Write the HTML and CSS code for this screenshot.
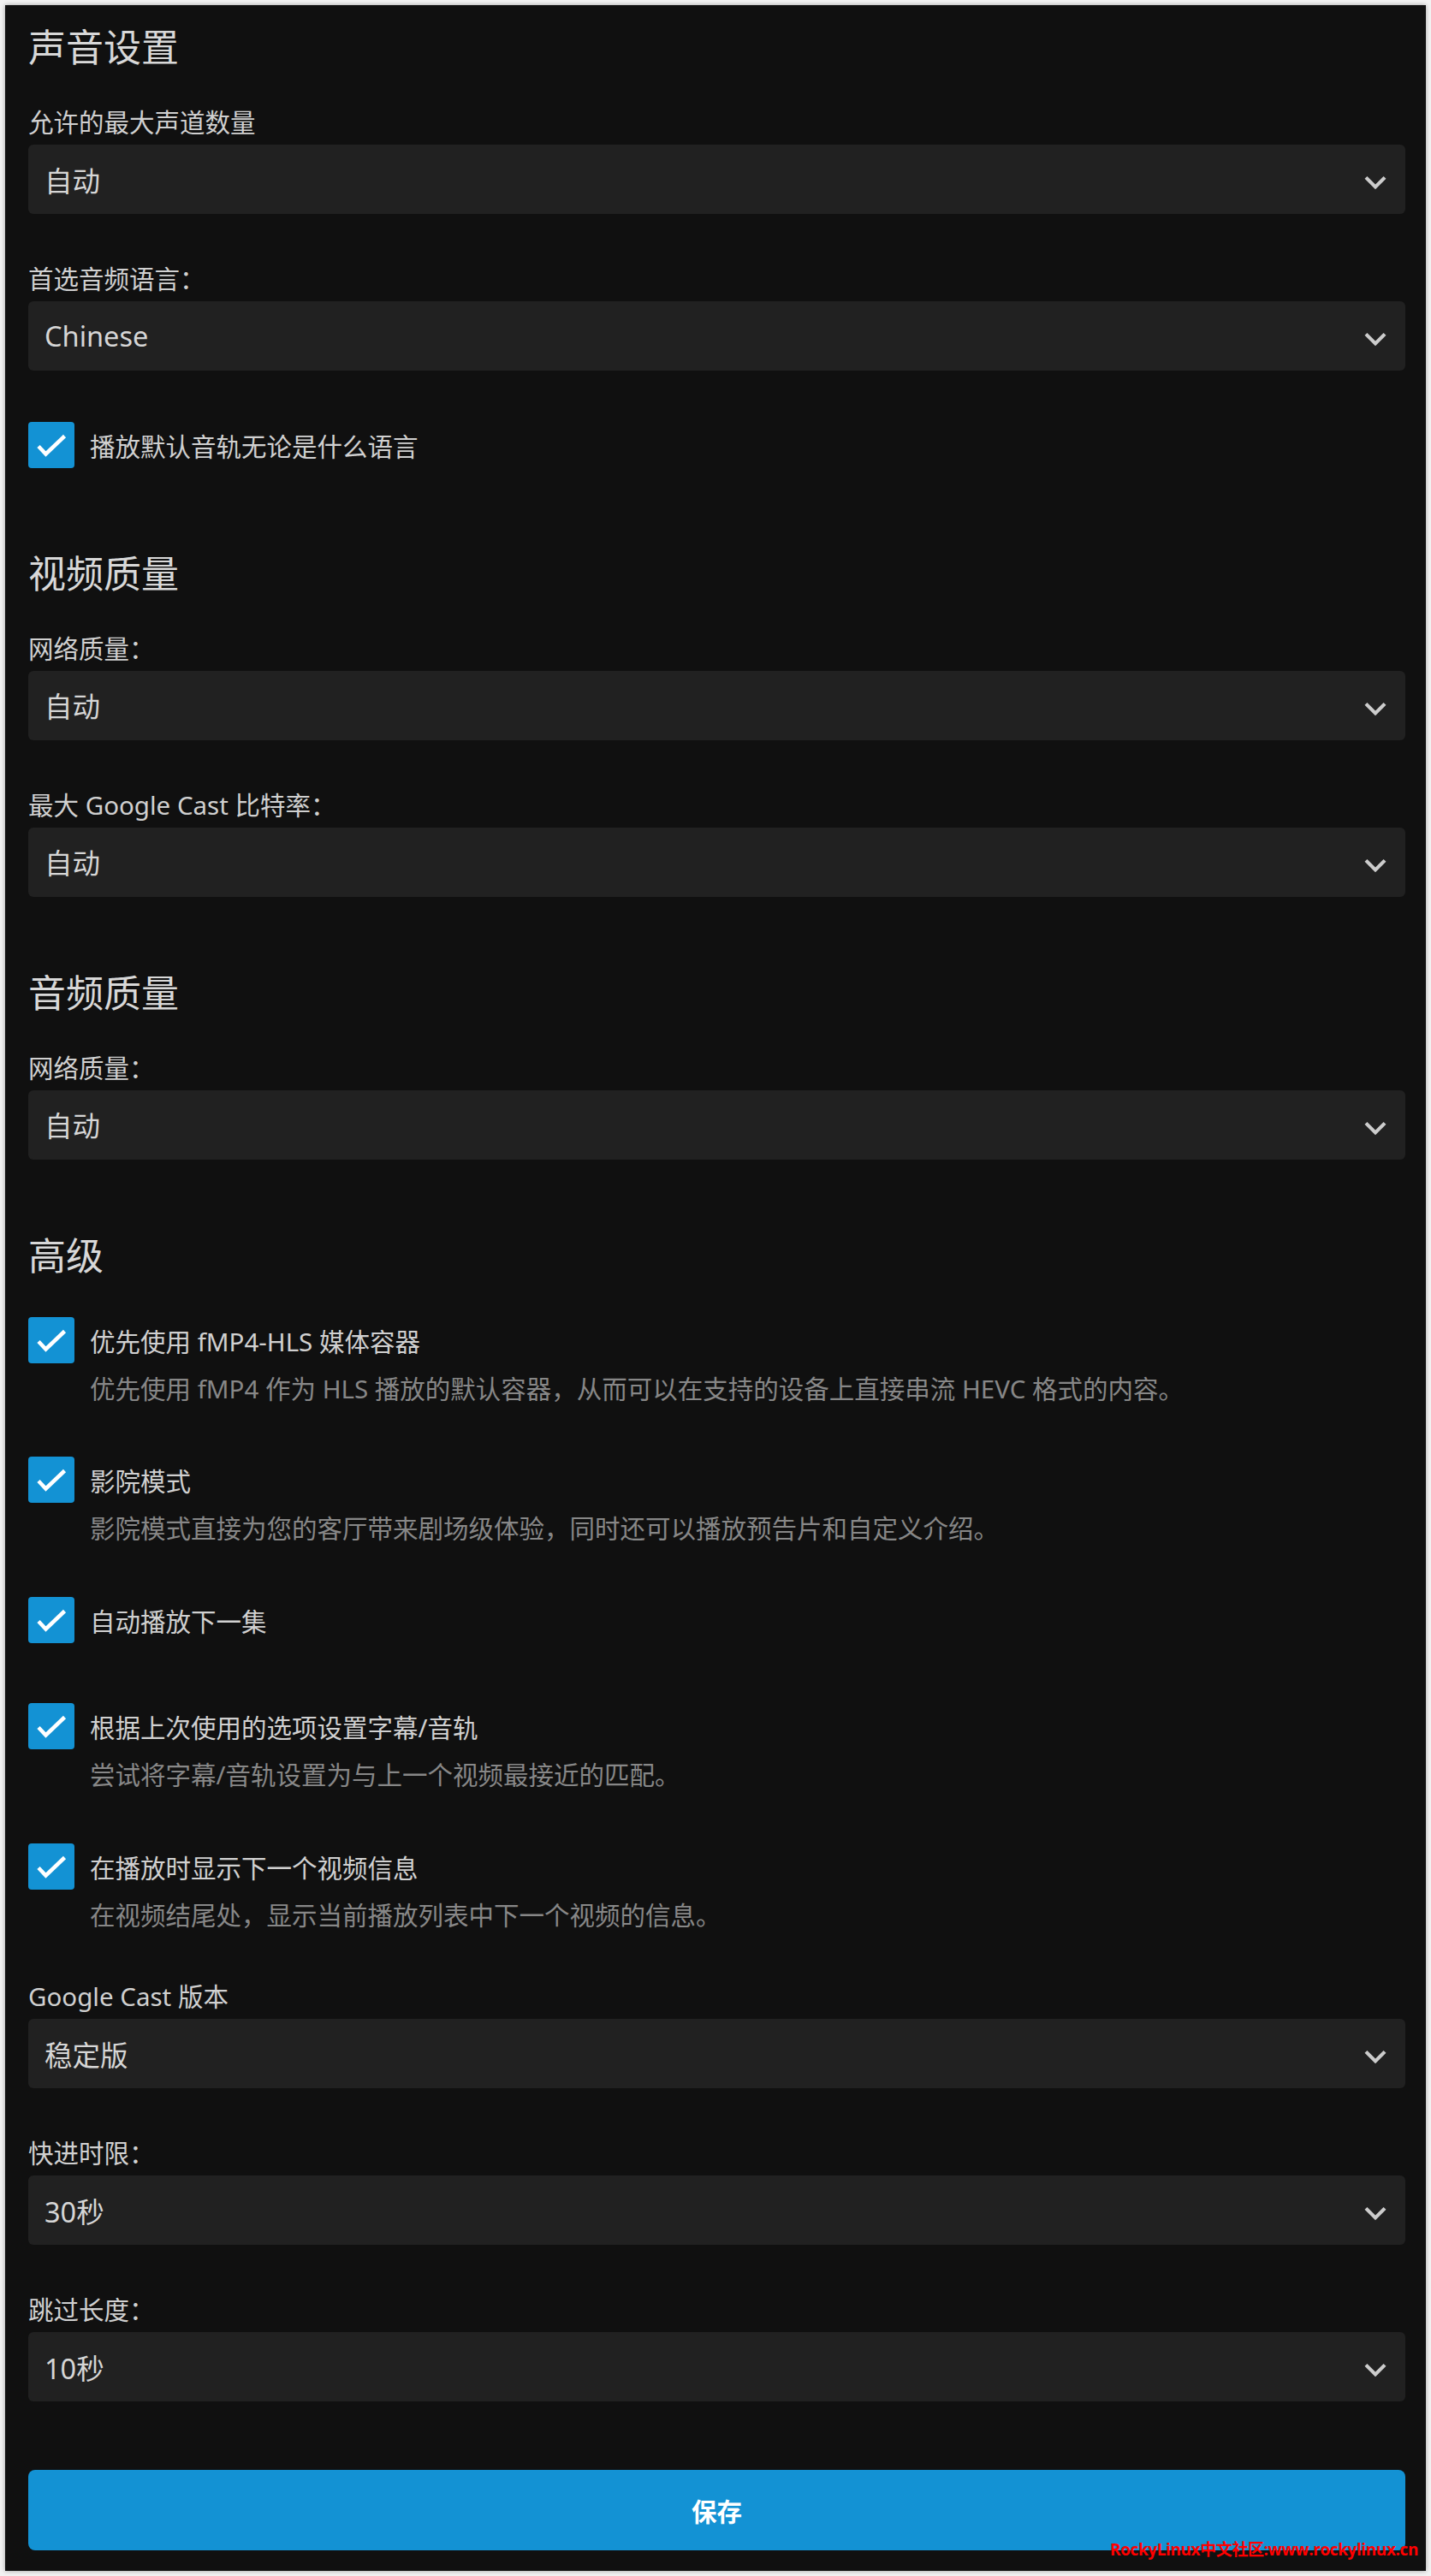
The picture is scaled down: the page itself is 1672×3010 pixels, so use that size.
FILE: index.html
```html
<!DOCTYPE html>
<html lang="zh-CN">
<head>
<meta charset="utf-8">
<title>播放设置</title>
<link rel="stylesheet" href="styles.css">
</head>
<body>
<div class="panel">
  <section class="section">
    <h2 class="section-title">声音设置</h2>
    <div class="field">
      <div class="field-label">允许的最大声道数量</div>
      <div class="select"><span class="select-value">自动</span><svg class="chevron" viewBox="0 0 24 24"><path d="M7.41 8.59L12 13.17l4.59-4.58L18 10l-6 6-6-6 1.41-1.41z"/></svg></div>
    </div>
    <div class="field">
      <div class="field-label">首选音频语言：</div>
      <div class="select"><span class="select-value">Chinese</span><svg class="chevron" viewBox="0 0 24 24"><path d="M7.41 8.59L12 13.17l4.59-4.58L18 10l-6 6-6-6 1.41-1.41z"/></svg></div>
    </div>
    <div class="check-field">
      <div class="check-row"><span class="checkbox"><svg viewBox="0 0 54 54"><polyline points="12,28.5 20.5,37.5 42.5,16.5"/></svg></span><span class="check-label">播放默认音轨无论是什么语言</span></div>
    </div>
  </section>

  <section class="section">
    <h2 class="section-title">视频质量</h2>
    <div class="field">
      <div class="field-label">网络质量：</div>
      <div class="select"><span class="select-value">自动</span><svg class="chevron" viewBox="0 0 24 24"><path d="M7.41 8.59L12 13.17l4.59-4.58L18 10l-6 6-6-6 1.41-1.41z"/></svg></div>
    </div>
    <div class="field">
      <div class="field-label">最大 Google Cast 比特率：</div>
      <div class="select"><span class="select-value">自动</span><svg class="chevron" viewBox="0 0 24 24"><path d="M7.41 8.59L12 13.17l4.59-4.58L18 10l-6 6-6-6 1.41-1.41z"/></svg></div>
    </div>
  </section>

  <section class="section">
    <h2 class="section-title">音频质量</h2>
    <div class="field">
      <div class="field-label">网络质量：</div>
      <div class="select"><span class="select-value">自动</span><svg class="chevron" viewBox="0 0 24 24"><path d="M7.41 8.59L12 13.17l4.59-4.58L18 10l-6 6-6-6 1.41-1.41z"/></svg></div>
    </div>
  </section>

  <section class="section">
    <h2 class="section-title">高级</h2>
    <div class="check-field has-desc">
      <div class="check-row"><span class="checkbox"><svg viewBox="0 0 54 54"><polyline points="12,28.5 20.5,37.5 42.5,16.5"/></svg></span><span class="check-label">优先使用 fMP4-HLS 媒体容器</span></div>
      <div class="check-desc">优先使用 fMP4 作为 HLS 播放的默认容器，从而可以在支持的设备上直接串流 HEVC 格式的内容。</div>
    </div>
    <div class="check-field has-desc">
      <div class="check-row"><span class="checkbox"><svg viewBox="0 0 54 54"><polyline points="12,28.5 20.5,37.5 42.5,16.5"/></svg></span><span class="check-label">影院模式</span></div>
      <div class="check-desc">影院模式直接为您的客厅带来剧场级体验，同时还可以播放预告片和自定义介绍。</div>
    </div>
    <div class="check-field">
      <div class="check-row"><span class="checkbox"><svg viewBox="0 0 54 54"><polyline points="12,28.5 20.5,37.5 42.5,16.5"/></svg></span><span class="check-label">自动播放下一集</span></div>
    </div>
    <div class="check-field has-desc">
      <div class="check-row"><span class="checkbox"><svg viewBox="0 0 54 54"><polyline points="12,28.5 20.5,37.5 42.5,16.5"/></svg></span><span class="check-label">根据上次使用的选项设置字幕/音轨</span></div>
      <div class="check-desc">尝试将字幕/音轨设置为与上一个视频最接近的匹配。</div>
    </div>
    <div class="check-field has-desc">
      <div class="check-row"><span class="checkbox"><svg viewBox="0 0 54 54"><polyline points="12,28.5 20.5,37.5 42.5,16.5"/></svg></span><span class="check-label">在播放时显示下一个视频信息</span></div>
      <div class="check-desc">在视频结尾处，显示当前播放列表中下一个视频的信息。</div>
    </div>
    <div class="field">
      <div class="field-label">Google Cast 版本</div>
      <div class="select"><span class="select-value">稳定版</span><svg class="chevron" viewBox="0 0 24 24"><path d="M7.41 8.59L12 13.17l4.59-4.58L18 10l-6 6-6-6 1.41-1.41z"/></svg></div>
    </div>
    <div class="field">
      <div class="field-label">快进时限：</div>
      <div class="select"><span class="select-value">30秒</span><svg class="chevron" viewBox="0 0 24 24"><path d="M7.41 8.59L12 13.17l4.59-4.58L18 10l-6 6-6-6 1.41-1.41z"/></svg></div>
    </div>
    <div class="field">
      <div class="field-label">跳过长度：</div>
      <div class="select"><span class="select-value">10秒</span><svg class="chevron" viewBox="0 0 24 24"><path d="M7.41 8.59L12 13.17l4.59-4.58L18 10l-6 6-6-6 1.41-1.41z"/></svg></div>
    </div>
  </section>

  <button class="save-button" type="button">保存</button>
</div>
<div class="watermark">RockyLinux中文社区:www.rockylinux.cn</div>
</body>
</html>
```

FILE: styles.css
```css
* { box-sizing: border-box; }

html, body {
  margin: 0;
  padding: 0;
}

body {
  position: relative;
  background: #f2f2f2;
  font-family: "Noto Sans", "Noto Sans CJK SC", sans-serif;
  font-size: 29.5px;
  color: #cfcfcf;
  min-height: 3010px;
  padding: 6px;
}

.panel {
  display: flow-root;
  background: #101010;
  box-shadow: 0 0 5px rgba(0, 0, 0, 0.35);
  padding: 22px 24px 24px 27px;
  min-height: 2998px;
}

.section {
  display: flow-root;
}

.section + .section {
  margin-top: 30px;
}

.section-title {
  margin: 0 0 39px;
  font-size: 44px;
  font-weight: 400;
  line-height: 55px;
  color: #d8d8d8;
}

.field {
  margin-bottom: 55px;
}

.field-label {
  line-height: 41px;
  margin-bottom: 6px;
  color: #d0d0d0;
}

.select {
  display: flex;
  align-items: center;
  justify-content: space-between;
  height: 81px;
  background: #212121;
  border-radius: 6px;
  padding: 0 10px 0 19px;
  font-size: 32.5px;
  color: #d6d6d6;
}

.chevron {
  width: 50px;
  height: 50px;
  margin-top: 7px;
  fill: #cccccc;
}

.check-field {
  padding-top: 5px;
  margin-bottom: 65.5px;
}

.check-field.has-desc {
  margin-bottom: 55.5px;
}

.check-row {
  display: flex;
  align-items: center;
  gap: 18px;
  height: 54px;
}

.checkbox {
  width: 54px;
  height: 54px;
  flex: none;
  background: #1392d4;
  border-radius: 4px;
  display: block;
}

.checkbox svg {
  display: block;
  width: 54px;
  height: 54px;
  fill: none;
  stroke: #ffffff;
  stroke-width: 4.5;
}

.check-label {
  line-height: 54px;
  padding-top: 4px;
  color: #d0d0d0;
}

.check-desc {
  margin-top: 11px;
  padding-left: 72px;
  line-height: 38px;
  color: #878787;
}

.save-button {
  display: block;
  width: 100%;
  height: 94px;
  margin-top: 25px;
  border: 0;
  border-radius: 8px;
  background: #1392d4;
  color: #ffffff;
  font-family: "Noto Sans", "Noto Sans CJK SC", sans-serif;
  font-size: 29.5px;
  font-weight: 700;
  cursor: pointer;
}

.watermark {
  position: absolute;
  right: 15px;
  top: 2967px;
  font-family: "Open Sans", "Noto Sans CJK SC", sans-serif;
  font-size: 19px;
  line-height: 24px;
  font-weight: 700;
  font-style: normal;
  letter-spacing: -0.4px;
  color: #ff0000;
  white-space: nowrap;
}
```
